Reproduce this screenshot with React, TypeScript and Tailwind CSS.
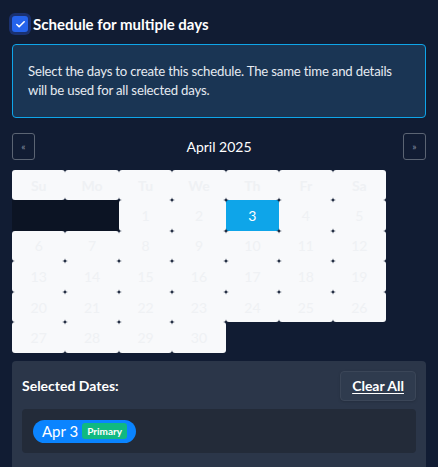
import { Check } from "lucide-react"

const days = [
  [null, null, 1, 2, 3, 4, 5],
  [6, 7, 8, 9, 10, 11, 12],
  [13, 14, 15, 16, 17, 18, 19],
  [20, 21, 22, 23, 24, 25, 26],
  [27, 28, 29, 30],
]
const weekdays = ["Su", "Mo", "Tu", "We", "Th", "Fr", "Sa"]

export default function App() {
  return (
    <div className="min-h-[467px] bg-[#111c33] px-3 pt-[13px] text-white" style={{ fontFamily: 'Lato, "Noto Sans", sans-serif' }}>
      <label className="flex h-[22px] items-center gap-[5px]">
        <span className="flex h-4 w-4 items-center justify-center rounded-[3px] bg-[#2563eb] ring-[3px] ring-[#1e3a8a]/70">
          <Check size={11} strokeWidth={3.5} className="text-white" />
        </span>
        <span className="text-[15px] font-bold">Schedule for multiple days</span>
      </label>

      <div className="mt-[9px] whitespace-nowrap rounded-[4px] border border-[#0ea5e9] bg-[#1a3554] px-[15px] py-[17px] text-[13.2px] leading-[19px] tracking-[-0.2px] text-[#e5eaf1]">
        Select the days to create this schedule. The same time and details
        <br />
        will be used for all selected days.
      </div>

      <div className="mt-[15px] flex items-center justify-between">
        <button className="flex h-[27px] w-[23px] items-center justify-center rounded-[3px] border border-[#5b6473] text-[10px] text-[#8a93a3]">«</button>
        <div className="text-[14px] text-white">April 2025</div>
        <button className="flex h-[27px] w-[23px] items-center justify-center rounded-[3px] border border-[#5b6473] text-[10px] text-[#8a93a3]">»</button>
      </div>

      <div className="mt-[10px] grid w-[374px] grid-cols-7">
        {weekdays.map((w) => (
          <div key={w} className="flex h-[30px] items-center justify-center rounded-[3px] bg-[#f8f9fb] text-[14px] font-bold text-[#eff1f4]">
            {w}
          </div>
        ))}
        {days.map((row, ri) =>
          row.map((d, ci) =>
            d === null ? (
              <div key={`${ri}-${ci}`} className="h-[30.6px] bg-[#0c1424]" />
            ) : (
              <div
                key={`${ri}-${ci}`}
                className={`flex h-[30.6px] items-center justify-center rounded-[3px] text-[14px] ${d === 3 ? "bg-[#0ea5e9] text-white" : "bg-[#f8f9fb] text-[#eff1f4]"}`}
              >
                {d}
              </div>
            )
          )
        )}
      </div>

      <div className="mt-2 rounded-t-[4px] bg-[#2b3649] px-[10px] pb-4 pt-[10px]">
        <div className="flex items-center justify-between">
          <div className="text-[14px] font-bold">Selected Dates:</div>
          <button className="h-[30px] rounded-[4px] border border-[#3b4658] bg-[#2f3b4e] px-[11px] text-[14px] font-bold underline underline-offset-2 shadow">Clear All</button>
        </div>
        <div className="mt-[8px] rounded-[4px] bg-[#232b39] px-[11px] py-[10px]">
          <span className="inline-flex h-[23px] items-center gap-[4px] rounded-full bg-[#0a84ff] pl-[9px] pr-[9px] text-[15px]">
            Apr 3
            <span className="rounded-[3px] bg-[#10b981] px-[5px] text-[10px] font-bold leading-[16px]">Primary</span>
          </span>
        </div>
      </div>
    </div>
  )
}
